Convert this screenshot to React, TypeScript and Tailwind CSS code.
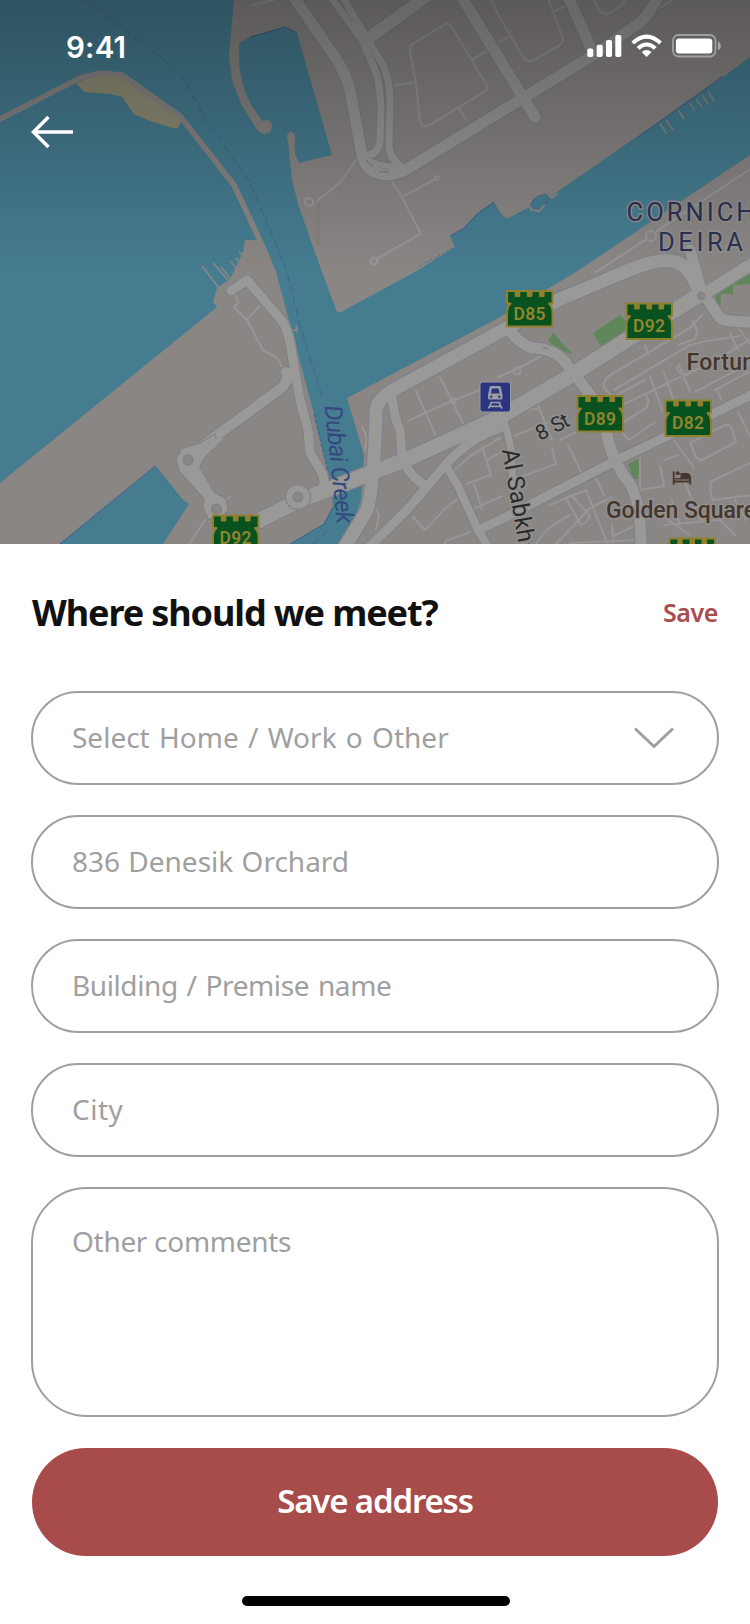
import React from "react";

const ROAD = "#999997";
const CASING = "#82818c";
const LAND = "#898684";
const WATER = "#457c90";

type Road = { d: string; w: number };

const northRoads: Road[] = [
  { d: "M427 -4L366 40", w: 12 },
  { d: "M293 -4L337 60Q347 76 350 90L361 150Q364 174 388 175Q402 173 412 166L595 54L638 24Q650 14 658 -4", w: 11 },
  { d: "M330 -4L362 40L375 70Q380 82 381 110L380 140Q379 155 366 155", w: 7 },
  { d: "M342 -4L368 40L383 65Q390 82 390 100L389 145Q389 158 402 167", w: 7 },
  { d: "M362 155Q370 165 396 167", w: 6 },
  { d: "M461 -4L535 117", w: 11 },
  { d: "M568 -4L590 46", w: 11 },
];

const southRoads: Road[] = [
  { d: "M509 329Q518 343 532 348Q556 348 568 366L600 408Q606 424 608 440Q615 466 630 484Q641 502 641 550", w: 11 },
  { d: "M755 393L680 430L617 460L500 520L478 530", w: 9 },
  { d: "M392 396Q394 418 400 430L402 458Q410 478 427 486", w: 9 },
  { d: "M500 428Q470 438 445 465Q428 486 405 512L370 546", w: 9 },
  { d: "M447 467L458 486L478 530L490 550", w: 8 },
  { d: "M503 420Q512 440 512 470L514 500", w: 7 },
  { d: "M231 291L247 280L283 322Q290 336 292 355L300 400L308 430L310 453L322 473Q328 488 316 492L305 495", w: 9 },
  { d: "M286 372Q290 380 280 389L205 444L192 452Q182 458 187 465L204 490L214 502", w: 10 },
  { d: "M690 250L701 290L720 318Q724 322 755 322", w: 11 },
  { d: "M755 262L701 296", w: 12 },
  { d: "M343 550L366 512Q372 500 375 440L376 416Q374 400 395 389L560 299L620 274Q660 256 676 262Q690 266 701 296", w: 13 },
  { d: "M701 294Q650 325 570 376L500 417L410 458L296 502L252 524", w: 15 },
];

const lanes = [
  "M447 23L411 45Q409 48 411 57L416 83L420 121Q422 128 428 126L484 92Q489 89 486 84L453 29Q450 24 447 23Z",
  "M416 82L393 86M472 60L486 51M459 108L466 120",
  "M490 -2L500 18L523 57Q528 63 534 60L560 45Q564 42 562 36L548 -2M497 43L511 36M553 12L565 6M593 -2L600 11Q603 15 609 13Q621 8 627 -2M660 8L675 -2",
  "M356 160L340 183L318 200M392 182L402 197L421 234L378 258M402 197L434 180M253 5L282 -2",
  "M752 168L657 231M645 240L596 272",
  "M235 296L239 302L234 307L247 320L259 306M247 320L263 350L277 358L283 368",
  "M408 421L440 406L482 389M416 391L435 434M440 377L463 423",
  "M365 450L367 438L362 426",
  "M455 470L470 456L500 438M482 446L491 475L466 484M474 484L482 509M487 460L502 452M473 509L502 496",
  "M413 517L425 530L444 510L457 499M442 550L446 541L470 532M374 505L379 515L376 530",
  "M498 377L512 371L517 369L541 356",
  "M537 403L552 440M520 412L540 408M514 436L548 422M568 445L582 474Q582 480 576 482L520 508M552 448L556 464L518 478M560 440L580 430",
  "M604 388Q602 380 612 374L690 328L702 315M614 390L690 345M604 388L613 397L645 380M612 410L645 394Q651 401 646 408L620 424M617 418Q620 432 629 440L655 422",
  "M645 346L649 355M692 321Q700 330 695 339L678 345M650 376L662 410M664 372L674 402M680 367L690 392M613 397L604 388",
  "M680 364Q672 370 686 375L720 358L752 338M715 390L752 370M740 330L750 344M730 333L738 350",
  "M643 395L680 377M695 392L752 362M717 390L721 399M690 345L706 341L740 336",
  "M690 443L725 425Q730 424 732 429L736 442L702 460Q697 460 695 455L690 443M640 458L640 490M660 466L664 486L640 490M674 440L694 468M664 460L678 455",
  "M738 412L752 440M710 482L752 462M712 482Q708 488 713 500L752 495M684 480L700 520L752 505M672 500L680 525",
  "M648 506L690 535M735 500L746 520M664 525L720 520L735 535",
  "M550 505L586 490L610 550M596 478L604 495M586 490L566 498L580 524Q585 526 590 516L572 496M612 497L590 508L560 540L550 550",
  "M534 550Q540 530 570 515M612 525L614 548M614 536L636 525M570 543L636 540",
  "M205 520L188 546M226 500L230 497",
];

function Shield({ x, y, label }: { x: number; y: number; label: string }) {
  return (
    <g transform={`translate(${x} ${y})`}>
      <path
        d="M1 1H9.7V6H13.3V1H21.9V6H25.5V1H34V6H37.600V1H46.500V13.500H43Q46.500 17 46.500 22V36.500H1V22Q1 17 4.500 13.500H1Z"
        fill="#07521f"
        stroke="#90802f"
        strokeWidth="2"
        strokeLinejoin="round"
      />
      <path d="M10.200 0V6H12.800V0ZM22.400 0V6H25V0ZM34.500 0V6H37.100V0Z" fill="#90802f" />
      <text
        x="7.5"
        y="29.6"
        textLength="32"
        fill="#90852f"
        className="font-['Roboto'] text-[17.5px] font-semibold"
      >
        {label}
      </text>
    </g>
  );
}

function RoundaboutHole({ x, y, r }: { x: number; y: number; r: number }) {
  return <circle cx={x} cy={y} r={r} fill={LAND} stroke={CASING} strokeWidth="1.3" />;
}

function RoadSet({ roads }: { roads: Road[] }) {
  return (
    <g fill="none" strokeLinecap="round" strokeLinejoin="round">
      {roads.map((r) => (
        <path key={`c${r.d}`} d={r.d} stroke={CASING} strokeWidth={r.w + 2.6} />
      ))}
      {roads.map((r) => (
        <path key={r.d} d={r.d} stroke={ROAD} strokeWidth={r.w} />
      ))}
    </g>
  );
}

function CityMap() {
  return (
    <svg
      viewBox="0 0 750 544"
      width="750"
      height="544"
      className="absolute inset-0"
      aria-hidden="true"
    >
      <defs>
        <linearGradient id="shade" x1="0" y1="0" x2="0" y2="1">
          <stop offset="0" stopColor="#000" stopOpacity="0.33" />
          <stop offset="1" stopColor="#000" stopOpacity="0" />
        </linearGradient>
      </defs>
      <rect width="750" height="544" fill={LAND} />

      {/* sea, creek and harbour basins */}
      <path
        fill={WATER}
        d="M0 0H234L229 55L232 80L241 104L258 131Q264 136 270 132Q275 124 268 120L262 121L250 103Q241 84 239 63L239 43L250 37L285 27L297 33L332 155L299 163L295 154V135Q291 128 287 135L289 150L292 180L299 207L322 272L337 312H341L415 272L455 247L450 236L464 228L477 214L494 202L500 212L505 218L528 206L540 205L557 192L723 77L750 57V155L576 272L500 317L347 398L364 455L361 500L354 522L341 544H290L324 524L333 507L332 495L328 472L314 414L276 272L262 240L245 240L243 252L230 279L217 288L213 302L217 307L0 483Z"
      />
      <path d="M156 466L183 500L189 504L163 544H60Z" fill={WATER} />
      <g fill="none" stroke="#3c5f8d" strokeWidth="1">
        <path d="M60 544L155 466" />
        <path d="M250 37L285 27L297 33M450 236L464 228L477 214L494 202M637 138L723 76M505 218L528 206M290 544L324 524L333 507" />
        <path d="M418 267L453 248" strokeDasharray="1 2" />
        <path d="M314 414L328 472" strokeDasharray="4 2" />
        <path
          d="M86 0L125 30L180 73L205 118L250 182L270 230L287 272L300 325L323 400M313 544L330 528"
          strokeDasharray="8 4"
          opacity="0.8"
        />
      </g>

      {/* breakwater and beach */}
      <path
        d="M76 83L84 92L110 94L122 97L134 114L150 121L172 128H178L181 122L178 115L125 77L100 74Z"
        fill="#8f8d76"
      />
      <path
        d="M-2 120L80 78L100 73L122 75L180 116L234 185L250 219L266 254L275 278"
        fill="none"
        stroke={LAND}
        strokeWidth="5.5"
      />
      <path
        d="M202 266L222 292M213 263L228 280M221 267L234 283M230 261L240 272M236 258L244 268M239 252L248 260"
        stroke={LAND}
        strokeWidth="1.7"
      />
      <path
        d="M660 123L667 134M666 120L673 130M678 110L684 119M690 103L695 111M696 99L702 107M702 95L708 104M708 91L714 101"
        stroke={LAND}
        strokeWidth="1.7"
      />
      {/* small marina on the north bank */}
      <path d="M530 206L534 199L539 196L546 194L549 198L543 207L538 210L532 209Z" fill={WATER} stroke="#3c5f8d" strokeWidth="0.8" />
      <path d="M506 218L529 206L532 210L539 211L545 205M548 195L552 198L558 193" fill="none" stroke={LAND} strokeWidth="2.2" />
      <path d="M318 203V245" stroke="#7c786f" strokeWidth="4" opacity="0.3" />
      <path d="M292 331L298 329M296 325L297 333" stroke={LAND} strokeWidth="1.6" />

      {/* parks */}
      <g fill="#60875a">
        <path d="M593 333L620 315L626 321L625 333L601 347Z" />
        <path d="M548 341L553 332L563 344L573 354L561 351Z" />
        <path d="M628 464L639 458V479H633Z" />
        <path d="M717 304Q713 291 721 286L750 274V284L733 285V294H721L720 314Z" />
      </g>

      <g fill="none" stroke="#979694" strokeWidth="2.1" strokeLinecap="round" strokeLinejoin="round">
        {lanes.map((d) => (
          <path key={d} d={d} />
        ))}
        <circle cx="309" cy="202" r="4" />
        <circle cx="374" cy="261" r="3.2" />
        <circle cx="437" cy="178" r="2" />
        <circle cx="651" cy="236" r="5" />
        <circle cx="453" cy="401" r="2.6" />
        <circle cx="517" cy="371" r="3.5" />
      </g>

      <RoadSet roads={northRoads} />
      <RoadSet roads={southRoads} />

      <g fill={ROAD} stroke={CASING} strokeWidth="1.3">
        <path d="M176 459L181 449L200 443L215 434L218 446Q202 456 199 471L212 491L226 499L228 508L223 519L208 519L203 507L204 499L179 471Z" />
        <circle cx="298" cy="497" r="12.5" />
      </g>
      <path d="M222 438L205 450Q199 456 197 468L212 494" fill="none" stroke={ROAD} strokeWidth="4" />
      <RoundaboutHole x={188} y={460} r={5} />
      <RoundaboutHole x={216.5} y={509} r={5} />
      <RoundaboutHole x={298} y={497} r={5} />
      <RoundaboutHole x={701} y={296} r={3.5} />
      <path d="M366 160L373 167M379 172H389" fill="none" stroke={CASING} strokeWidth="1.6" />
      <path d="M543 347L548 349" stroke={CASING} strokeWidth="1.6" />

      {/* place and street names */}
      <g className="font-['Roboto']" stroke="#929090" strokeWidth="3" strokeLinejoin="round" paintOrder="stroke">
        <text x="626.5" y="220.7" textLength="128" fill="#2c3152" className="text-[25.5px]">
          CORNICH
        </text>
        <text x="658" y="250.7" textLength="85" fill="#2c3152" className="text-[25.5px]">
          DEIRA
        </text>
        <text x="686.5" y="369.5" textLength="81" fill="#46362b" className="text-[23px] font-medium">
          Fortune
        </text>
        <text x="606" y="518" textLength="150" fill="#46362b" className="text-[23px] font-medium">
          Golden Square
        </text>
        <text
          transform="translate(540 441) rotate(-27)"
          textLength="35"
          fill="#2b2b2b"
          className="text-[21px] [word-spacing:3px]"
        >
          8 St
        </text>
        <text transform="translate(502 450) rotate(80)" textLength="108" fill="#2b2b2b" className="text-[24px]">
          Al Sabkha
        </text>
      </g>
      <text
        transform="translate(324.5 406) rotate(84)"
        textLength="119"
        fill="#34497f"
        className="font-['Roboto'] text-[24.5px] italic"
      >
        Dubai Creek
      </text>

      {/* metro station */}
      <rect x="479.5" y="381.5" width="31.5" height="31" rx="3" fill="#9a9aa4" />
      <rect x="480.5" y="382.5" width="29.500" height="29" rx="2" fill="#2b357f" />
      <path d="M491 386H499.500Q500.500 386 500.800 387L502.500 395V398Q502.500 399.500 501 399.500H489.500Q488 399.500 488 398V395L489.700 387Q490 386 491 386Z" fill="#9a9ba6" />
      <path d="M492 388.500H498.500L499.700 393.500H490.800Z" fill="#2b357f" />
      <circle cx="491.200" cy="396.800" r="1.200" fill="#2b357f" />
      <circle cx="499.300" cy="396.800" r="1.200" fill="#2b357f" />
      <path d="M490 402.500H500.500M489.500 406.300H501M491.800 402L488.500 408.500M498.700 402L502 408.500" stroke="#9a9ba6" strokeWidth="1.700" fill="none" />

      {/* hotel */}
      <path
        d="M673.700 471.500V484.500M673.700 481.500H690.500M690.200 478V484.500"
        stroke="#46362b"
        strokeWidth="1.8"
        fill="none"
      />
      <path d="M680.500 473H687Q691 473.500 691 478V479.500H680.500Z" fill="#46362b" />
      <circle cx="677.700" cy="473.200" r="2" fill="#46362b" />
      <path d="M675 478.800H681" stroke="#46362b" strokeWidth="1.3" />

      <Shield x={506} y={290} label="D85" />
      <Shield x={625.5} y={302.500} label="D92" />
      <Shield x={576.5} y={395} label="D89" />
      <Shield x={664.5} y={399.500} label="D82" />
      <Shield x={212} y={514.500} label="D92" />
      <Shield x={668.5} y={537.500} label="" />

      <rect width="750" height="272" fill="url(#shade)" />
    </svg>
  );
}

function StatusIcons() {
  return (
    <svg width="136" height="26" viewBox="586 33 136 26" fill="#fff" aria-hidden="true">
      <rect x="587.300" y="48.500" width="6" height="8.500" rx="1.700" />
      <rect x="596.700" y="44.700" width="6" height="12.300" rx="1.700" />
      <rect x="606" y="40" width="6" height="17" rx="1.700" />
      <rect x="615.300" y="35" width="6" height="22" rx="1.700" />
      <path d="M631.400 41.600Q646.600 27.600 661.900 41.600L659.200 44.400Q646.600 33.200 634.100 44.400Z" />
      <path d="M636.600 46.900Q646.600 38 656.700 46.900L653.800 49.700Q646.600 43.500 639.500 49.700Z" />
      <path d="M641.800 52.100Q646.600 48 651.500 52.100L646.600 57Z" />
      <rect x="673" y="35" width="42.500" height="21.500" rx="5.500" fill="none" stroke="#fff" strokeOpacity="0.4" strokeWidth="1.800" />
      <rect x="675.900" y="38.400" width="36.400" height="15" rx="3" />
      <path d="M718 41.500Q720.800 42.800 720.800 46T718 50.300Z" fillOpacity="0.45" />
    </svg>
  );
}

type FieldProps = { children: string; spacing: string; icon?: React.ReactNode };

function Field({ children, spacing, icon }: FieldProps) {
  return (
    <div className="flex h-[94px] items-center justify-between rounded-full border-2 border-[#9f9f9f] pr-[43px] pl-[39px]">
      <span className={`pb-[2px] text-[28px] leading-none text-[#9f9f9f] ${spacing}`}>{children}</span>
      {icon}
    </div>
  );
}

export default function App() {
  return (
    <main className="flex h-[1624px] w-[750px] flex-col overflow-hidden bg-white font-['Noto_Sans',sans-serif]">
      <section className="relative h-[544px] shrink-0 overflow-hidden">
        <CityMap />
        <div className="relative flex h-[59px] items-start justify-between pt-[33px] pr-[28px] pl-[66px]">
          <span className="pt-px font-['Inter'] text-[29.5px] leading-[26px] font-semibold tracking-[0.2px] text-white">
            9:41
          </span>
          <StatusIcons />
        </div>
        <button aria-label="Back" className="relative mt-[56px] ml-[31px] block">
          <svg width="43" height="34" viewBox="31 115 43 34" fill="none" stroke="#fff" strokeWidth="3.500" aria-hidden="true">
            <path d="M48.500 117L33.500 132L48.500 147M33.500 132H73" />
          </svg>
        </button>
      </section>

      <header className="flex items-center justify-between px-8 pt-[44px]">
        <h1 className="text-[36px] leading-[50px] font-bold tracking-[-1.1px] text-[#111]">
          Where should we meet?
        </h1>
        <button className="pb-[2px] text-[25px] leading-[48px] font-semibold tracking-[-0.4px] text-[#a94c4c]">
          Save
        </button>
      </header>

      <form className="mt-[53px] flex flex-col gap-[30px] px-[31px]">
        <Field
          spacing="[word-spacing:2px]"
          icon={
            <svg width="40" height="22" viewBox="0 0 40 22" fill="none" stroke="#9f9f9f" strokeWidth="3" aria-hidden="true">
              <path d="M1 1.500L20 19.500L39 1.500" />
            </svg>
          }
        >
          Select Home / Work o Other
        </Field>
        <Field spacing="[word-spacing:1px]">836 Denesik Orchard</Field>
        <Field spacing="tracking-[-0.4px] [word-spacing:2px]">Building / Premise name</Field>
        <Field spacing="tracking-[0.5px]">City</Field>
        <div className="h-[230px] rounded-[56px] border-2 border-[#9f9f9f] px-[39px] pt-[38px] text-[28px] leading-none tracking-[-0.3px] text-[#9f9f9f]">
          Other comments
        </div>
        <button
          type="button"
          className="mx-px mt-px h-[108px] rounded-full bg-[#a74c4b] pb-[2px] text-[33px] font-semibold tracking-[-1.15px] text-white"
        >
          Save address
        </button>
      </form>
      <div className="mt-[40px] ml-[242px] h-[10px] w-[268px] rounded-full bg-black" />
    </main>
  );
}
